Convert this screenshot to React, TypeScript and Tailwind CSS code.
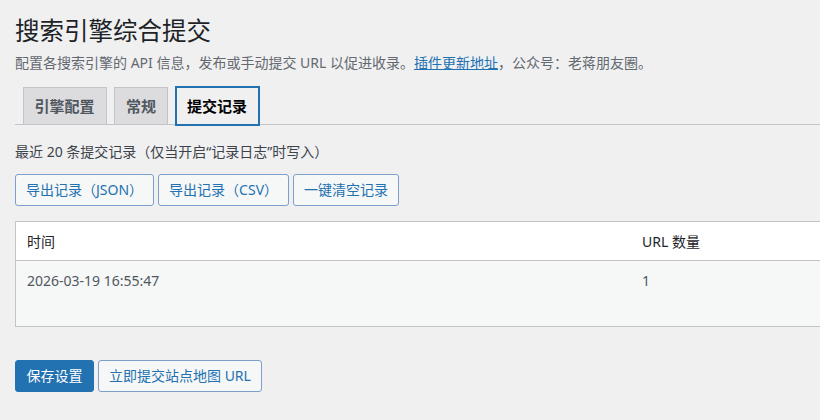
import React from "react";

const font = { fontFamily: '"Noto Sans", "Noto Sans CJK SC", sans-serif' };

function Tab({ label, active }: { label: string; active?: boolean }) {
  if (active) {
    return (
      <div className="ml-[7.5px] -mb-px h-[38px] px-[10.5px] flex items-center border border-[#2271b1] bg-[#f0f0f1] text-[15px] font-semibold text-black shadow-[0_0_0_1px_#2271b1] leading-[26px]">
        {label}
      </div>
    );
  }
  return (
    <div className="ml-[7.5px] -mb-px h-[38px] px-[11px] flex items-center border border-[#c3c4c7] bg-[#dcdcde] text-[15px] font-semibold text-[#50575e] leading-[26px]">
      {label}
    </div>
  );
}

function SecButton({ label }: { label: string }) {
  return (
    <button className="h-[32px] px-[10px] rounded-[3px] border border-[#7d9fcb] bg-[#f6f7f7] text-[14px] leading-[20px] text-[#2271b1] whitespace-nowrap">
      {label}
    </button>
  );
}

export default function App() {
  return (
    <div
      className="w-[820px] min-h-[420px] overflow-hidden bg-[#f0f0f1] pl-[15px] pt-[15px]"
      style={font}
    >
      <h1 className="text-[24.5px] leading-[32px] font-normal text-[#1d2327] whitespace-nowrap">
        搜索引擎综合提交
      </h1>
      <p className="mt-[6px] text-[14px] leading-[20px] text-[#646970] whitespace-nowrap">
        配置各搜索引擎的 API 信息，发布或手动提交 URL 以促进收录。
        <a className="text-[#2271b1] underline">插件更新地址</a>
        ，公众号：老蒋朋友圈。
      </p>

      <div className="mt-[14px] flex border-b border-[#c3c4c7] w-[900px]">
        <Tab label="引擎配置" />
        <Tab label="常规" />
        <Tab label="提交记录" active />
      </div>

      <p className="mt-[17px] text-[14px] leading-[20px] text-[#3c434a] whitespace-nowrap">
        最近 20 条提交记录（仅当开启“记录日志”时写入）
      </p>

      <div className="mt-[12px] flex gap-[4px]">
        <SecButton label="导出记录（JSON）" />
        <SecButton label="导出记录（CSV）" />
        <SecButton label="一键清空记录" />
      </div>

      <div className="mt-[15px] w-[1010px] border border-[#c3c4c7] bg-white">
        <div className="flex h-[39px] items-center border-b border-[#c3c4c7] text-[14px] leading-[21px] text-[#1d2327]">
          <div className="w-[615px] px-[11px]">时间</div>
          <div className="px-[11px]">URL 数量</div>
        </div>
        <div className="flex h-[65px] items-start bg-[#f6f7f7] pt-[9px] text-[14px] leading-[21px] text-[#50575e]">
          <div className="w-[615px] px-[11px]">2026-03-19 16:55:47</div>
          <div className="px-[11px]">1</div>
        </div>
      </div>

      <div className="mt-[33px] flex gap-[4px]">
        <button className="h-[32px] px-[10.5px] rounded-[3px] border border-[#2271b1] bg-[#2271b1] text-[14px] leading-[20px] text-white whitespace-nowrap">
          保存设置
        </button>
        <SecButton label="立即提交站点地图 URL" />
      </div>
    </div>
  );
}
